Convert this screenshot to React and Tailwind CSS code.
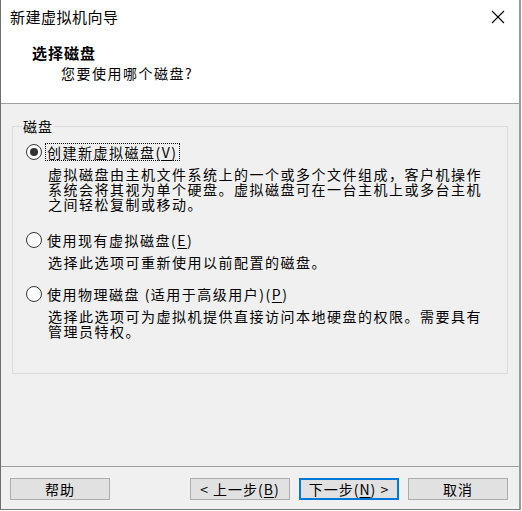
import React from 'react';

const font = "font-['Noto_Sans_CJK_SC','Noto_Sans',sans-serif]";

function Radio({ checked }) {
  return (
    <span className="flex h-[16px] w-[16px] shrink-0 items-center justify-center rounded-full border border-[#333] bg-white">
      {checked && <span className="h-[8px] w-[8px] rounded-full bg-[#333]" />}
    </span>
  );
}

function Key({ children }) {
  return <span className="underline underline-offset-2">{children}</span>;
}

function Option({ checked, focused, label, lines, className }) {
  return (
    <div className={className}>
      <div className="flex h-[18px] items-center">
        <Radio checked={checked} />
        <span
          className={`ml-[3px] px-[1px] leading-[16px] ${
            focused ? 'border border-dotted border-black' : 'border border-transparent'
          }`}
        >
          {label}
        </span>
      </div>
      <div className="mt-[6px] pl-[22px] leading-[15px]">
        {lines.map((l) => (
          <div key={l} className="whitespace-nowrap">
            {l}
          </div>
        ))}
      </div>
    </div>
  );
}

function Button({ children, primary }) {
  return (
    <button
      className={`flex h-[22px] w-[100px] items-center justify-center bg-[#e1e1e1] text-[14px] tracking-[1px] text-black ${
        primary ? 'border-2 border-[#0078d7]' : 'border border-[#adadad]'
      }`}
    >
      {children}
    </button>
  );
}

export default function App() {
  return (
    <div className={`h-[511px] w-[522px] bg-white text-black ${font}`}>
      <div className="flex h-[510px] w-[521px] flex-col border-b border-l border-r-2 border-b-[#7a7a7a] border-l-[#6e6e6e] border-r-[#9a9a9a]">
        {/* Header */}
        <div className="h-[104px] border-b border-[#a0a0a0] bg-white">
          <div className="flex h-[34px] items-center justify-between pl-[9px] pr-[14px]">
            <span className="text-[15px] tracking-[0.5px]">新建虚拟机向导</span>
            <svg width="14" height="14" viewBox="0 0 14 14" fill="none" stroke="#000" strokeWidth="1.1">
              <path d="M1 1 L13 13 M13 1 L1 13" />
            </svg>
          </div>
          <div className="mt-[10px] pl-[31px] text-[15px] font-bold leading-[18px] tracking-[1px]">
            选择磁盘
          </div>
          <div className="mt-[2px] pl-[60px] text-[14px] leading-[18px] tracking-[1.5px]">
            您要使用哪个磁盘?
          </div>
        </div>

        {/* Body */}
        <div className="flex-1 bg-[#f0f0f0] pl-[11px] pt-[14px] text-[14px] tracking-[1.5px]">
          <fieldset className="h-[256px] w-[496px] border border-[#dcdcdc] pl-[9px]">
            <legend className="px-[1px] leading-[16px] tracking-[1px]">磁盘</legend>
            <Option
              className="ml-[4px] mt-[9px]"
              checked
              focused
              label={
                <>
                  创建新虚拟磁盘(<Key>V</Key>)
                </>
              }
              lines={[
                '虚拟磁盘由主机文件系统上的一个或多个文件组成，客户机操作',
                '系统会将其视为单个硬盘。虚拟磁盘可在一台主机上或多台主机',
                '之间轻松复制或移动。',
              ]}
            />
            <Option
              className="ml-[4px] mt-[19px]"
              label={
                <>
                  使用现有虚拟磁盘(<Key>E</Key>)
                </>
              }
              lines={['选择此选项可重新使用以前配置的磁盘。']}
            />
            <Option
              className="ml-[4px] mt-[15px]"
              label={
                <>
                  使用物理磁盘 (适用于高级用户)(<Key>P</Key>)
                </>
              }
              lines={['选择此选项可为虚拟机提供直接访问本地硬盘的权限。需要具有', '管理员特权。']}
            />
          </fieldset>
        </div>

        {/* Footer */}
        <div className="flex h-[43px] items-start border-t border-[#a0a0a0] bg-[#f0f0f0] pl-[9px] pr-[11px] pt-[11px]">
          <Button>帮助</Button>
          <div className="flex-1" />
          <div className="flex gap-[9px]">
            <Button>
              &lt; 上一步(<Key>B</Key>)
            </Button>
            <Button primary>
              下一步(<Key>N</Key>) &gt;
            </Button>
            <Button>取消</Button>
          </div>
        </div>
      </div>
    </div>
  );
}
